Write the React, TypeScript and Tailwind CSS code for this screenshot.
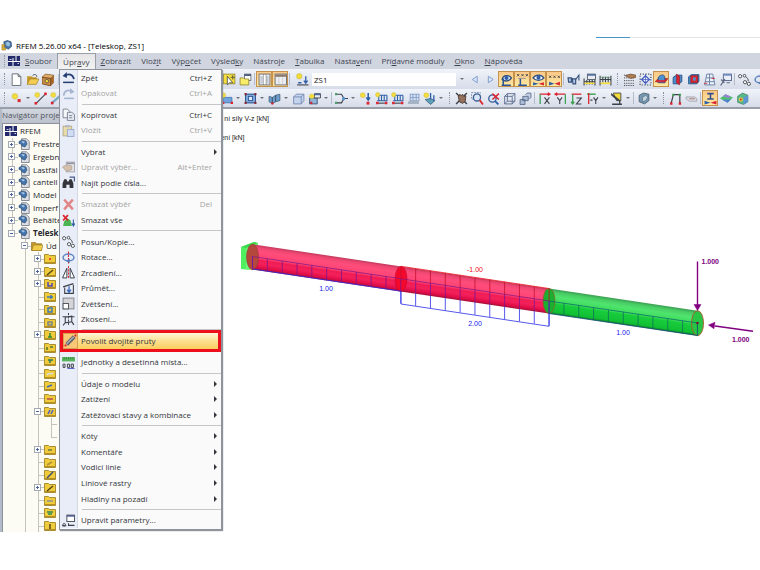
import type { ReactNode } from "react";
import clsx from "clsx";

const Y = "#f3dc3c";
const R = "#dc2430";
const B = "#2f5fa8";
const K = "#3c4048";
const L = "#8fb4e0";

// 12 x 12 glyphs shared by the toolbars and the menu
const glyphs: Record<string, ReactNode> = {
  newDoc: <path d="M2 .8h5.500l2.500 2.500v8.200H2zM7.500 .8v2.500h2.500" fill="#fff" stroke="#6d7178" strokeWidth=".9" />,
  open: (
    <>
      <path d="M1 3h4l1 1h4v6H1z" fill="#c79a2c" />
      <path d="M3.500 5.500H12L9.500 10.500H1z" fill="#f2cd52" stroke="#8a6a1c" strokeWidth=".5" />
      <path d="M6 2.500c2-2 4-1 4 1" stroke={K} fill="none" strokeWidth=".8" />
    </>
  ),
  folder: (
    <>
      <path d="M.5 2.500h4l1 1.200h5v6.800H.5z" fill="#c79a2c" stroke="#8a6a1c" strokeWidth=".6" />
      <path d="M2.500 5H12l-1.500 5.500H.8z" fill="#f0cc48" stroke="#8a6a1c" strokeWidth=".5" />
    </>
  ),
  crate: (
    <>
      <path d="M0 4l3-3 8 1v7l-3 3-8-2z" fill="#a8682c" />
      <path d="M0 4l3-3 8 1-3 3z" fill="#e0ac68" stroke="#5c3a1a" strokeWidth=".4" />
      <path d="M0 4l8 1v7l-8-2z" fill="#c98a45" stroke="#5c3a1a" strokeWidth=".6" />
      <circle cx="4.500" cy="7.500" r="1.600" fill={Y} stroke={K} strokeWidth=".6" />
    </>
  ),
  save: <path d="M1 1h10v10H1z" fill="#8fb4e8" stroke="#5078b4" strokeWidth=".7" />,
  point: (
    <>
      <circle cx="4.500" cy="4" r="2.600" fill={Y} stroke="#c8b848" strokeWidth=".5" />
      <rect x="7" y="6.500" width="2.800" height="2.800" fill={R} />
    </>
  ),
  line: (
    <>
      <circle cx="3" cy="2.800" r="2.300" fill={Y} stroke="#c8b848" strokeWidth=".4" />
      <path d="M2 10.500L10.500 2" stroke={K} strokeWidth="1" />
      <rect x=".5" y="9.200" width="2.400" height="2.400" fill={R} />
      <rect x="9.400" y=".5" width="2.400" height="2.400" fill={R} />
    </>
  ),
  member: (
    <>
      <circle cx="3" cy="2.800" r="2.300" fill={Y} stroke="#c8b848" strokeWidth=".4" />
      <path d="M2 10L10.500 2.500" stroke="#7ca8c4" strokeWidth="2.200" />
      <rect x=".8" y="9" width="2.400" height="2.400" fill={R} />
    </>
  ),
  pick: (
    <>
      <rect x=".5" y="1" width="10.500" height="9" fill={Y} stroke="#8a8028" strokeWidth=".7" />
      <path d="M4 3v8l2-2h3z" fill="#fff" stroke={K} strokeWidth=".7" />
      <path d="M9 2v4M7 4h4" stroke={K} strokeWidth=".7" />
    </>
  ),
  folderNew: (
    <>
      <rect x="5" y="1" width="6" height="6" fill="#fff" stroke={K} strokeWidth=".6" />
      <rect x="5" y="1" width="6" height="1.800" fill="#4f5f80" />
      <path d="M1 4.500h3l1 1h4V11H1z" fill="#f8ec68" stroke="#8a8028" strokeWidth=".7" />
    </>
  ),
  tableV: (
    <>
      <rect x="1" y="1" width="10" height="10" fill="#fff" stroke="#6c7078" strokeWidth=".9" />
      <path d="M2 2.500h2.500V10H2zM7.500 2.500h2.500V10H7.500z" fill="#c8ccd6" />
      <path d="M5 1v10M7.500 1v10" stroke="#6c7078" strokeWidth=".5" />
    </>
  ),
  tableH: (
    <>
      <rect x="1" y="1" width="10.500" height="10" fill="#eceef2" stroke="#6c7078" strokeWidth=".9" />
      <rect x="1.500" y="1.500" width="9.500" height="2" fill="#8c7868" />
      <path d="M4.500 4v7M8 4v7" stroke="#b0b4bc" strokeWidth=".5" />
    </>
  ),
  loadCase: (
    <>
      <circle cx="3" cy="3" r="2.500" fill={Y} stroke="#b8a428" strokeWidth=".4" />
      <path d="M9 3v5.500M7.300 7L9 9.300 10.700 7" stroke={B} strokeWidth="1.200" fill="none" />
      <path d="M2 9h3" stroke={B} strokeWidth="1.400" />
      <path d="M1 11h10.500" stroke={K} />
    </>
  ),
  prev: <path d="M8.500 3L4 6l4.500 3z" fill="#dce8f8" stroke="#7c9cd0" strokeWidth=".9" />,
  next: <path d="M4 3l4.500 3L4 9z" fill="#dce8f8" stroke="#7c9cd0" strokeWidth=".9" />,
  eyeLoad: (
    <>
      <path d="M2 6C2.500 2 8 1 10.500 4.500 9 8 4 8 2 6z" fill="#dfeaf8" stroke="#2c4c7c" strokeWidth="1.200" />
      <circle cx="6" cy="4.600" r="1.900" fill={B} />
      <path d="M3 5v6M1.500 11.300h8.500" stroke="#2c5494" strokeWidth="1.400" />
    </>
  ),
  valuesY: (
    <>
      <path d="M1 1l2 2m0-2L1 3M5 1l2 2m0-2L5 3M9 1l2 2m0-2L9 3" stroke={K} strokeWidth=".8" />
      <path d="M4 5v6M2 11.300h8" stroke="#2c5494" strokeWidth="1.400" />
      <path d="M2 5h7" stroke="#7c8498" strokeWidth=".7" />
    </>
  ),
  eyeResult: (
    <>
      <path d="M1 4.500C3.500 1 8.500 1 11 4.500 8.500 7.500 3.500 7.500 1 4.500z" fill="#fff" stroke="#2c4c7c" strokeWidth="1.200" />
      <circle cx="6" cy="4.300" r="1.900" fill={B} />
      <path d="M1 8.500v3l5-1.500z" fill={B} />
      <path d="M6 10l5-1.500v3z" fill={R} />
    </>
  ),
  valuesX: (
    <>
      <path d="M1 2.500l2 2m0-2l-2 2M5 2.500l2 2m0-2l-2 2M9 2.500l2 2m0-2l-2 2" stroke={K} strokeWidth=".8" />
      <path d="M1 8v3.500l5-1.500z" fill={B} />
      <path d="M6 10l5-2v3.500z" fill={R} />
    </>
  ),
  glasses: (
    <>
      <path d="M1 4.500h3v4H1.500zM5 5.500h3v4.500H5.500z" fill="#b8cce8" stroke="#34507c" strokeWidth="1.100" />
      <path d="M4 5l1.500 1M8 6l3-4v5" stroke="#34507c" fill="none" />
    </>
  ),
  calc: (
    <>
      <path d="M1 5v6.500M11 6v5.500M1 8h10M3.500 6.500v4M6 6.500v4M8.500 6.500v4" stroke={K} />
      <path d="M1.500 9.500h9" stroke={Y} strokeWidth="1.400" />
      <rect x="4" y="1" width="7.500" height="5" fill="#e8ebf2" stroke={K} strokeWidth=".7" />
      <rect x="4" y="1" width="7.500" height="1.500" fill="#4f6ca0" />
    </>
  ),
  calcAll: (
    <>
      <path d="M1 2.500v9M11 2.500v9M1 6h10M3.500 3.500v5M6 3.500v5M8.500 3.500v5" stroke={K} />
      <path d="M1.500 9.500h9" stroke={Y} strokeWidth="1.600" />
      <path d="M2 4h8" stroke="#4f8f60" strokeWidth=".7" />
    </>
  ),
  gridHand: (
    <>
      <path d="M1 2h10M1 4.500h10M1 7h10M1 9.500h10M1 11.500h10" stroke={K} strokeWidth=".9" strokeDasharray="1 1" />
      <path d="M2 2.500L7 1l5 1v2L7 5z" fill="#b07c50" stroke="#5c3c28" strokeWidth=".5" />
    </>
  ),
  snap: (
    <>
      <path d="M1 1h10v10H1z" fill="none" stroke={K} strokeDasharray="1 1.500" />
      <path d="M6 2.500L9.500 6 6 9.500 2.500 6z" fill="#fff" stroke="#4560c0" strokeWidth="1.200" />
      <path d="M6 1v10M1 6h10" stroke="#4560c0" strokeWidth=".7" />
    </>
  ),
  planeXY: (
    <>
      <path d="M0 8l3-3h9l-3 4z" fill={R} stroke="#84202a" strokeWidth=".5" />
      <path d="M3 4c2-3 6-3 6 0v5H3z" fill="#4f90d0" stroke="#1f4c84" strokeWidth=".7" />
      <path d="M1 6.500h10l-2 2H2z" fill={R} opacity=".85" />
    </>
  ),
  planeYZ: (
    <>
      <path d="M2 4l3-2h5v6l-3 2H2z" fill="#4f90d0" stroke="#1f4c84" strokeWidth=".8" />
      <path d="M5 1l3 2v8l-3-2z" fill={R} stroke="#84202a" strokeWidth=".5" />
    </>
  ),
  planeXZ: (
    <>
      <path d="M1.500 3.500L4 1.500h7v6l-2 2.500H1.500z" fill="#4f90d0" stroke="#1f4c84" strokeWidth=".8" />
      <rect x="3.500" y="2.500" width="6.500" height="6.500" fill={R} stroke="#84202a" strokeWidth=".6" />
      <path d="M5.500 4h2.500v3H5.500z" fill="#4f90d0" />
    </>
  ),
  raster: (
    <>
      <path d="M3.500 1L1.500 11h9.500L9 1zM3 4.500h7M2.500 8h8M6 1v10" fill="#eef2f8" stroke="#6c84a8" strokeWidth=".9" />
      <path d="M1 9.500h3M8 5h3" stroke={R} strokeWidth=".8" />
    </>
  ),
  dialogTool: (
    <>
      <rect x="4" y="1" width="7.500" height="6" fill="#e8eefa" stroke="#4c5c80" strokeWidth=".8" />
      <rect x="4" y="1" width="7.500" height="1.500" fill="#6f8cc0" />
      <path d="M1.500 11.500l4-6M2 6l3 3M7 9h3" stroke="#5c6880" strokeWidth="1.100" />
    </>
  ),
  nodes: (
    <>
      <circle cx="2" cy="3" r="1.500" fill="#fff" stroke={K} strokeWidth=".8" />
      <circle cx="6" cy="2.500" r="1.200" fill="#fff" stroke={K} strokeWidth=".8" />
      <circle cx="6.500" cy="8.500" r="1.500" fill="#fff" stroke={K} strokeWidth=".8" />
      <circle cx="10" cy="10" r="1.500" fill="#fff" stroke={K} strokeWidth=".8" />
      <path d="M7 3.500c2 1 2.500 2.500 2.500 4" stroke={K} fill="none" strokeWidth=".8" />
    </>
  ),
  rotate: (
    <>
      <ellipse cx="6" cy="6" rx="5" ry="3.200" fill="none" stroke="#5c84c4" strokeWidth="1.400" />
      <path d="M6 .5v11" stroke={R} strokeDasharray="2 1" />
      <path d="M4 9.200l3 2V7z" fill="#4f78b8" />
    </>
  ),
  surface: (
    <>
      <path d="M3 5h8v5H3z" fill="#6fa4dc" stroke={B} strokeWidth=".6" />
      <circle cx="3" cy="3" r="2.200" fill={Y} stroke="#c8b848" strokeWidth=".4" />
      <path d="M2 9h2v2H2zM9.800 9H12v2H9.800z" fill={R} />
    </>
  ),
  opening: (
    <>
      <rect x="1.500" y="2" width="9" height="8" fill={L} stroke="#245090" />
      <rect x="4" y="4" width="4" height="4" fill="#dce8f8" stroke="#245090" strokeWidth=".9" />
      <path d="M.5 1h2v2h-2zM9.500 1h2v2h-2zM.5 9h2v2h-2zM9.500 9h2v2h-2z" fill="#8a2c38" />
    </>
  ),
  wall: (
    <>
      <path d="M1 4l3 1v6L1 9zM4 5l3-2v6l-3 2zM7 3l4-1v6l-4 1z" fill="#6f9cc8" stroke="#34506c" strokeWidth=".6" />
      <path d="M3 9.500h2v2H3z" fill={R} />
    </>
  ),
  solid: (
    <>
      <path d="M1.500 4.500l2.500-2.500h7v6l-2.500 3h-7z" fill="#c4d4ec" stroke="#7488b0" strokeWidth=".8" />
      <path d="M1.500 4.500h7v6.500M8.500 4.500L11 2" stroke="#7488b0" fill="none" strokeWidth=".8" />
    </>
  ),
  solidSet: (
    <>
      <path d="M1.500 5.500h7V11h-7z" fill="#8fb4d8" stroke="#34506c" strokeWidth=".8" />
      <path d="M6 1.500h5.500v4H6z" fill="#e8ebf2" stroke={K} strokeWidth=".8" />
      <path d="M6 1.500h5.500v1.500H6z" fill="#4f6ca0" />
      <circle cx="3.500" cy="4" r="2.200" fill={Y} stroke="#c8b848" strokeWidth=".4" />
      <path d="M2 9h2v2H2z" fill={R} />
    </>
  ),
  hinge: (
    <>
      <path d="M1 2h5l2 3.500M1 10h5l2-3.500M8 6h4" stroke={K} strokeWidth="1" fill="none" />
      <circle cx="8" cy="6" r="1.500" fill="#4f90d0" />
      <path d="M0 9h2v2H0zM0 1h2v2H0z" fill="#4c9c6c" />
    </>
  ),
  nodalLoad: (
    <>
      <circle cx="3.500" cy="3" r="2.300" fill={Y} stroke="#c8b848" strokeWidth=".4" />
      <path d="M8.500 1v6M6.800 5l1.700 2.500L10.200 5" stroke={B} strokeWidth="1.400" fill="none" />
      <rect x="7" y="9" width="2.600" height="2.600" fill={R} />
    </>
  ),
  memberLoad: (
    <>
      <path d="M3.500 3h7.500M3.500 3v5M6 3v5M8.500 3v5M11 3v5M2 8h9.500" stroke={B} fill="none" />
      <circle cx="2.500" cy="2.500" r="2" fill={Y} stroke="#c8b848" strokeWidth=".4" />
      <path d="M3 10.300h6" stroke={K} />
      <path d="M1 9h2.400v2.400H1zM9 9h2.400v2.400H9z" fill={R} />
    </>
  ),
  areaLoad: (
    <>
      <path d="M3 2h8v6H3zM3 5h8M5.500 2v6M8.500 2v6" stroke="#8ca4cc" fill="#d8e4f4" />
      <path d="M1 9l2-1.500h8V11H1z" fill="#a4b4c4" />
    </>
  ),
  freeLoad: (
    <>
      <circle cx="3" cy="3" r="2.300" fill={Y} stroke="#c8b848" strokeWidth=".4" />
      <path d="M2 7l5-1 4 2-4 3.500z" fill="#5fa0b8" stroke="#245068" strokeWidth=".6" />
      <path d="M7 1v6M10 3v5" stroke={B} strokeWidth="1.200" />
    </>
  ),
  hand: (
    <>
      <path d="M1 1l3 3M11 1L8 4M1 11l3-3M11 11L8 8" stroke={K} strokeWidth="1.300" />
      <path d="M3 4l1.500-2 1 1.500L7 2l1 2 2-.5-.5 5L7 10.500 4 9z" fill="#94705c" stroke="#3c2c24" strokeWidth=".7" />
    </>
  ),
  zoomWin: (
    <>
      <path d="M.5 .5h8v6h-8z" fill="none" stroke="#6c84b0" strokeDasharray="1.500 1" strokeWidth=".8" />
      <circle cx="5.500" cy="5" r="3.300" fill="#d8e6f8" stroke="#3c5c94" strokeWidth="1.200" />
      <path d="M8 7.500l3 4" stroke={R} strokeWidth="1.600" />
    </>
  ),
  zoomAll: (
    <>
      <circle cx="5" cy="6" r="3.400" fill="#d8e6f8" stroke="#3c5c94" strokeWidth="1.200" />
      <path d="M7.500 8.500l3 3" stroke={B} strokeWidth="1.600" />
      <path d="M5 1.500l6 5.500m0-5.500L5 7" stroke={R} strokeWidth="1.300" />
    </>
  ),
  cube: <path d="M1.500 4h7v7h-7zM1.500 4L4 1.500h7L8.500 4M11 1.500v7L8.500 11M4 1.500v7h7M4 8.500L1.500 11" fill="none" stroke="#56688c" strokeWidth=".8" />,
  cubes: (
    <>
      <path d="M6 2.500L7.500 1H11v4L9.500 6.500" fill="#c4d0e4" stroke="#56688c" strokeWidth=".8" />
      <path d="M3.500 4h5v4h-5zM1 7h4.500v4.500H1z" fill="#aebcd4" stroke="#56688c" strokeWidth=".8" />
    </>
  ),
  axX: (
    <>
      <path d="M1.500 2h9.500M9 .7L11 2 9 3.300" stroke={R} fill="none" strokeWidth="1.200" />
      <path d="M2 2v9" stroke="#3ca050" strokeWidth="1.200" />
      <path d="M6 5l4.500 6m0-6L6 11" stroke={K} />
    </>
  ),
  axY: (
    <>
      <path d="M1 2h9.500M3 .7L1 2l2 1.300" stroke={R} fill="none" strokeWidth="1.200" />
      <path d="M10.500 2v9" stroke="#3ca050" strokeWidth="1.200" />
      <path d="M3 5l2.300 3L7.500 5M5.300 8v3" stroke={K} fill="none" />
    </>
  ),
  axZ: (
    <>
      <path d="M1.500 2h9" stroke={R} strokeWidth="1.200" />
      <path d="M2.500 2v9M1 9l1.500 2L4 9" stroke="#3ca050" fill="none" strokeWidth="1.200" />
      <path d="M6 5.500h4.500L6 11h4.500" stroke={K} fill="none" />
    </>
  ),
  axMinusY: (
    <>
      <path d="M1 2h8" stroke="#3ca050" strokeWidth="1.300" />
      <path d="M2.500 1v10" stroke={R} strokeWidth="1.200" />
      <path d="M4 7.500h2M7 5l2 3 2-3M9 8v3" stroke={K} fill="none" />
    </>
  ),
  render: (
    <>
      <path d="M3 1h7v7H6z" fill={Y} stroke={K} strokeWidth=".8" />
      <path d="M1 1l9 7H7L1 3z" fill={K} />
      <path d="M2 11.300h9M9 8v3" stroke={K} strokeWidth="1.200" />
    </>
  ),
  globe: (
    <>
      <path d="M2 3l4-2 5 1v6l-4 3-5-2z" fill="#7898b0" stroke="#40586c" strokeWidth=".7" />
      <path d="M5 5l3-2 2 2-2 3-3 1z" fill="#c0d4e0" stroke="#40586c" strokeWidth=".5" />
    </>
  ),
  frame: (
    <>
      <path d="M2 10.500L4 2.500h6v8" stroke={K} fill="none" strokeWidth="1.100" />
      <path d="M1 9.500h2.200v2.200H1zM9 9.500h2.200v2.200H9z" fill={R} />
      <path d="M3 1.500h2v2H3zM9 1.500h2v2H9z" fill="#3ca050" />
    </>
  ),
  pill: (
    <>
      <path d="M1 4.500h8l2 2v2H4L1 6.500z" fill="#d8dae0" stroke="#a4a8b0" strokeWidth=".8" />
      <path d="M4 6.200h5" stroke="#b08080" />
    </>
  ),
  section: (
    <>
      <path d="M3 1.500h6M6 1.500v5M3 6.500h6" stroke="#34508c" strokeWidth="1.400" />
      <path d="M.5 8v3.500L6 10z" fill={B} />
      <path d="M6 10l5.500-2v3.500z" fill={R} />
    </>
  ),
  isoSurf: (
    <>
      <path d="M0 6l5-4 7 3-5 5z" fill="#4fc070" />
      <path d="M2.500 4L5 2l5 2.200-2 1.300z" fill="#9c80d8" />
      <path d="M2 7.200L10 7 7 10z" fill="#4f80d8" />
    </>
  ),
  isoSolid: (
    <>
      <path d="M1.500 4L6 1l5 2v6l-4 2.500-5.500-2z" fill="#58b888" stroke="#34785c" strokeWidth=".6" />
      <path d="M7 5l4-2v6l-4 2.500z" fill="#5c94d4" />
      <circle cx="4.500" cy="7" r="1.900" fill="#e8d040" />
      <circle cx="4.500" cy="7" r=".9" fill={R} />
    </>
  ),
  undo: (
    <>
      <path d="M3 4.500c3-2.500 7-1.500 8 3" stroke="#263f72" strokeWidth="1.600" fill="none" />
      <path d="M.5 4.500L4.500 1v5.500z" fill="#263f72" />
      <path d="M1 10.500h10" stroke="#263f72" strokeWidth="1.400" />
    </>
  ),
  redo: (
    <>
      <path d="M9 4.500C6 2 2 3 1.500 8" stroke="#a4b4d0" strokeWidth="1.600" fill="none" />
      <path d="M11.500 4.500L7.500 1v5.500z" fill="#a4b4d0" />
      <path d="M2 10.500h9" stroke="#a4b4d0" strokeWidth="1.400" />
    </>
  ),
  copy: (
    <>
      <path d="M1 1h4l2 2v6H1z" fill="#f4f6fa" stroke="#737a88" strokeWidth=".8" />
      <path d="M5 4h4l2.500 2v5.500H5zM6.500 7h3M6.500 9h3" fill="#e8ecf4" stroke="#737a88" strokeWidth=".8" />
    </>
  ),
  paste: (
    <>
      <rect x="1" y="2" width="8" height="9" fill="#e8dca8" stroke="#b0a888" strokeWidth=".8" />
      <rect x="3" y="1" width="4" height="2" fill="#b4b8c4" />
      <rect x="5" y="5" width="6" height="6.500" fill="#cfdcf4" stroke="#98a8cc" strokeWidth=".8" />
    </>
  ),
  props: (
    <>
      <rect x="4" y="1" width="7.500" height="9" fill="#e4e4e8" stroke="#a0a0a8" strokeWidth=".8" />
      <path d="M4.500 2.200h6.500" stroke="#8c90a0" strokeWidth="1.400" />
      <path d="M.5 5.500l3.500-2 5 1v3.500l-5 1.500z" fill="#d4c0ac" stroke="#a89888" strokeWidth=".6" />
    </>
  ),
  binoculars: (
    <>
      <path d="M7 1h4.500v4" stroke="#4c5c90" fill="none" strokeWidth="1.300" />
      <path d="M.5 11V7l1.500-4h2l1 2h1l1-2h2l1.500 4v4H7V8H4v3z" fill="#34363c" />
    </>
  ),
  cross: <path d="M2 1.500c3 3 5 5.500 8 9M10 1.500L2 10.500" stroke="#e08484" strokeWidth="2.200" />,
  crossAll: (
    <>
      <path d="M2 7l3-3 3 2 1 5H1z" fill="#4cb450" />
      <path d="M10.500 5v5M9 8.500l1.500 2.500L12 8.500" stroke={B} fill="none" />
      <path d="M1 1l4.500 5M5.500 1L1 6" stroke={R} strokeWidth="1.600" />
    </>
  ),
  mirror: (
    <>
      <path d="M4.500 2v9H.5zM7.500 2v9h4z" fill="#fff" stroke={K} strokeWidth=".9" />
      <path d="M6 0v12" stroke={R} strokeDasharray="2 1" strokeWidth=".9" />
    </>
  ),
  project: (
    <>
      <path d="M1 4.500l9.500-3M2.500 5v5.500h8V2.500" stroke={K} fill="none" />
      <path d="M6.500 4v4.500M4.700 7l1.800 2.500L8.300 7" stroke="#3c68c0" fill="none" strokeWidth="1.200" />
    </>
  ),
  scale: (
    <>
      <rect x="1" y="1" width="10" height="10" fill="#d4d4d8" stroke="#84868c" strokeWidth=".9" />
      <rect x="1" y="6" width="5" height="5" fill="#fff" stroke="#54565c" strokeWidth=".9" />
    </>
  ),
  shear: (
    <>
      <path d="M3 4l6-1v5l-6 1zM.5 3.500h11M3 9l-2 2.500M9 8l2 3" stroke={K} fill="none" strokeWidth="1" />
      <path d="M6 0v12" stroke={K} strokeDasharray="2 1" strokeWidth=".9" />
    </>
  ),
  bar: (
    <>
      <path d="M2.500 9.500l7-7" stroke="#60646c" strokeWidth="3.600" />
      <path d="M2.500 9l6.500-6.500" stroke="#a8acb4" strokeWidth="1.400" />
      <path d="M.5 9.700h1.800v1.800H.5zM9.700.5h1.800v1.800H9.700z" fill={R} />
    </>
  ),
  units: (
    <>
      <rect x="0" y="1" width="12" height="4" fill="#58b45c" />
      <path d="M2 1v2M4 1v2M6 1v2M8 1v2M10 1v2" stroke="#2c7034" strokeWidth=".6" />
      <path d="M1 7.500h1.800v3H1zM5 7.500h2v3H5zM8.500 7.500h2v3h-2z" fill="none" stroke={K} strokeWidth=".9" />
      <path d="M5 11.600h6.500" stroke="#4048c0" strokeWidth=".8" />
    </>
  ),
  params: (
    <>
      <rect x="4.500" y="1" width="7" height="6" fill="#fff" stroke={K} strokeWidth=".8" />
      <rect x="4.500" y="1" width="7" height="1.500" fill="#4f5f90" />
      <path d="M6 8.500v2M5.500 10.500h6M0 10.800h4" stroke={K} strokeWidth="1" fill="none" />
      <circle cx="2" cy="10" r="1.200" fill="none" stroke={K} strokeWidth=".8" />
    </>
  ),
};

const Glyph = ({ name, className = "size-[13px]" }: { name: string; className?: string }) => (
  <svg viewBox="0 0 12 12" className={clsx("shrink-0", className)} aria-hidden="true">
    {glyphs[name]}
  </svg>
);

const Tool = ({ name, on }: { name: string; on?: boolean }) => (
  <button
    type="button"
    aria-label={name}
    aria-pressed={on}
    className={clsx(
      "flex h-4 w-4 shrink-0 items-center justify-center",
      on && "border border-[#c4924c] bg-gradient-to-b from-[#fbc888] to-[#fde9a0]"
    )}
  >
    <Glyph name={name} />
  </button>
);

const Caret = () => (
  <span className="flex w-2 shrink-0 justify-center">
    <span className="border-x-2 border-t-2 border-x-transparent border-t-[#6c7078]" />
  </span>
);

const Sep = () => <span className="mx-px h-3 w-px shrink-0 bg-[#b4bac8]" />;

const Grip = () => (
  <span className="flex w-2 shrink-0 justify-center">
    <span className="h-3 border-l border-dotted border-[#8a92a4]" />
  </span>
);

// "|" separator, ":" grip, "v" drop-down arrow, leading "*" marks a pressed button
const Tools = ({ items }: { items: string }) => (
  <>
    {items.split(" ").map((item, i) => {
      if (item === "|") return <Sep key={i} />;
      if (item === ":") return <Grip key={i} />;
      if (item === "v") return <Caret key={i} />;
      return <Tool key={i} name={item.replace("*", "")} on={item.startsWith("*")} />;
    })}
  </>
);

const Brand = () => (
  <svg viewBox="0 0 12 10" className="h-[10px] w-3 shrink-0" aria-hidden="true">
    <rect width="12" height="10" fill="#232a6c" />
    <path d="M0 5.500h12M5 2v8M8 0v5.500" stroke="#fff" strokeWidth="1" />
    <path d="M1.500 3.500h2M9.500 7.500h1.500" stroke="#fff" strokeWidth=".8" />
  </svg>
);

const AppIcon = () => (
  <svg viewBox="0 0 12 12" className="size-[11px] shrink-0" aria-hidden="true">
    <path d="M3 2l4-1.500L11 2l.5 5L8 10 4 8z" fill="#4878ac" stroke="#24405c" strokeWidth=".7" />
    <path d="M5 3l3-1 2 2-1 3-3-1z" fill="#9cc0e0" />
    <path d="M1 5h3v2H2.500v1.500H5V11H1z" fill="#e8b830" stroke="#7c6018" strokeWidth=".5" />
  </svg>
);

const ModelIcon = () => (
  <svg viewBox="0 0 12 12" className="size-3 shrink-0" aria-hidden="true">
    <path d="M3.500 .8h5l2.700 2.500v8.200H3.500z" fill="#dcdee4" stroke="#7c828c" strokeWidth=".9" />
    <path d="M1 3.500L4 2l4 1 1 3-2 3-3-1-1-2-2-.5z" fill="#4474ac" stroke="#284868" strokeWidth=".6" />
    <path d="M3 3.800l2-.8 2 1-1.500 1.500z" fill="#a4c4e4" />
  </svg>
);

const menuBar = [
  ["", "S", "oubor"],
  ["Úpr", "a", "vy"],
  ["", "Z", "obrazit"],
  ["Vlož", "i", "t"],
  ["Výp", "o", "čet"],
  ["Výsled", "k", "y"],
  ["Nástro", "j", "e"],
  ["", "T", "abulka"],
  ["Nasta", "v", "ení"],
  ["Pří", "d", "avné moduly"],
  ["", "O", "kno"],
  ["", "N", "ápověda"],
];

type MenuEntry = {
  label: string;
  icon?: string;
  keys?: string;
  disabled?: boolean;
  sub?: boolean;
  hot?: boolean;
};

const menu: (MenuEntry | null)[] = [
  { label: "Zpět", icon: "undo", keys: "Ctrl+Z" },
  { label: "Opakovat", icon: "redo", keys: "Ctrl+A", disabled: true },
  null,
  { label: "Kopírovat", icon: "copy", keys: "Ctrl+C" },
  { label: "Vložit", icon: "paste", keys: "Ctrl+V", disabled: true },
  null,
  { label: "Vybrat", sub: true },
  { label: "Upravit výběr...", icon: "props", keys: "Alt+Enter", disabled: true },
  { label: "Najít podle čísla...", icon: "binoculars" },
  null,
  { label: "Smazat výběr", icon: "cross", keys: "Del", disabled: true },
  { label: "Smazat vše", icon: "crossAll" },
  null,
  { label: "Posun/Kopie...", icon: "nodes" },
  { label: "Rotace...", icon: "rotate" },
  { label: "Zrcadlení...", icon: "mirror" },
  { label: "Průmět...", icon: "project" },
  { label: "Zvětšení...", icon: "scale" },
  { label: "Zkosení...", icon: "shear" },
  null,
  { label: "Povolit dvojité pruty", icon: "bar", hot: true },
  null,
  { label: "Jednotky a desetinná místa...", icon: "units" },
  null,
  { label: "Údaje o modelu", sub: true },
  { label: "Zatížení", sub: true },
  { label: "Zatěžovací stavy a kombinace", sub: true },
  null,
  { label: "Kóty", sub: true },
  { label: "Komentáře", sub: true },
  { label: "Vodicí linie", sub: true },
  { label: "Liniové rastry", sub: true },
  { label: "Hladiny na pozadí", sub: true },
  null,
  { label: "Upravit parametry...", icon: "params" },
];

const EditMenu = () => (
  <div
    role="menu"
    className="absolute bottom-[2px] left-[59px] top-[69px] z-20 flex w-[163px] flex-col border border-[#8f939b] bg-[#fafafa] pb-px shadow-[1px_1px_1px_#8f939b]"
  >
    {menu.map((m, i) =>
      m ? (
        <button
          key={i}
          type="button"
          role="menuitem"
          disabled={m.disabled}
          className={clsx(
            "relative flex min-h-0 flex-1 items-center text-left text-[8px] leading-none",
            m.disabled ? "text-[#a4a4a4]" : "text-[#33363c]"
          )}
        >
          {m.hot && (
            <span className="absolute -inset-y-[3px] inset-x-0 border-[3px] border-[#ee0f1c] bg-gradient-to-b from-[#fff6d8] via-[#fce090] to-[#f9cf5c]" />
          )}
          <span
            className={clsx(
              "relative flex shrink-0 items-center justify-center self-stretch",
              m.hot ? "ml-[3px] w-[15px] border border-[#d8a050] bg-[#fbc878]" : "w-[18px] border-r border-[#d4d8e2] bg-[#e9edf7]"
            )}
          >
            {m.icon && <Glyph name={m.icon} />}
          </span>
          <span className="relative flex-1 whitespace-nowrap pl-[3px]">{m.label}</span>
          {m.keys && <span className="pr-[9px]">{m.keys}</span>}
          {m.sub && <span className="mr-1 border-y-[3px] border-l-[3px] border-y-transparent border-l-[#33363c]" />}
        </button>
      ) : (
        <div key={i} className="flex h-[6px] shrink-0 items-center">
          <span className="h-full w-[18px] border-r border-[#d4d8e2] bg-[#e9edf7]" />
          <span className="ml-1 h-px flex-1 bg-[#c4c6ca]" />
        </div>
      )
    )}
  </div>
);

const Expander = ({ open }: { open?: boolean }) => (
  <svg viewBox="0 0 7 7" className="relative size-[7px]" aria-hidden="true">
    <rect x=".5" y=".5" width="6" height="6" fill="#fff" stroke="#a4aab4" />
    <path d={open ? "M2 3.500h3" : "M2 3.500h3M3.500 2v3"} stroke="#4c64a0" />
  </svg>
);

// v: vertical guide, t: branch, l: last branch, +/-: expander on a branch, L: last open expander, "_": blank
const Guide = ({ kind }: { kind: string }) => (
  <span className="relative flex w-[13px] shrink-0 items-center justify-center self-stretch">
    {kind !== "_" && (
      <span
        className={clsx(
          "absolute left-1/2 top-0 w-px bg-[#c4c4bc]",
          kind === "l" || kind === "L" ? "h-1/2" : "h-full"
        )}
      />
    )}
    {kind !== "_" && kind !== "v" && <span className="absolute left-1/2 right-0 top-1/2 h-px bg-[#c4c4bc]" />}
    {"+-L".includes(kind) && <Expander open={kind !== "+"} />}
  </span>
);

const Folder = ({ mark }: { mark: string }) => (
  <svg viewBox="0 0 12 11" className="h-[11px] w-3 shrink-0" aria-hidden="true">
    <path d="M.5 1.500h4l1 1h6v8H.5z" fill="#f0cc3c" stroke="#94781c" strokeWidth=".8" />
    <path d="M1 9.500h10" stroke="#b89020" />
    <path d={mark.split("/")[1]} stroke={mark.split("/")[0]} strokeWidth="1.500" fill="none" />
  </svg>
);

const models = ["Prestre", "Ergebn", "Lastfäl", "cantell", "Model", "Imperf", "Behälte"];

const folders: [string, string][] = [
  ["+", "#dc2430/M5 6h2"],
  ["+", "#54481c/M3 9l6-5"],
  ["+", "#5048b8/M4 4v4h4V5"],
  ["t", "#3c78b8/M3 6h6M7 4v4"],
  ["t", "#3c78b8/M4 4h4v4H4z"],
  ["t", "#7c8488/M4 5h4v3H4z"],
  ["+", "#2c8c34/M6 4v4M4 8h4"],
  ["t", "#54782c/M3 5v3M6 5h3"],
  ["t", "#2c7c54/M4 5h5M6 5v3"],
  ["t", "#d8dce0/M3 7c2-3 4 0 6-2"],
  ["t", "#3c6cb8/M3 7l5-2"],
  ["t", "#b84c54/M3 6h6"],
  ["-", "#4c60c8/M4 8l2-4M7 8l2-4"],
  ["v", ""],
  ["v", "last"],
  ["+", "#6c7848/M4 6h4"],
  ["t", "#b09038/M3 8l5-3"],
  ["t", "#3c4c74/M3 9l6-6"],
  ["+", "#54481c/M3 9l6-5"],
  ["t", "#8c9094/M3 6h6"],
  ["t", "#2c8c54/M3 5h6M4 7h4"],
  ["t", "#54481c/M6 4v5"],
];

const TreeRow = ({ children }: { children: ReactNode }) => (
  <li className="flex min-h-0 flex-1 items-center whitespace-nowrap">{children}</li>
);

const Navigator = () => (
  <aside className="flex w-[219px] shrink-0 flex-col border-l-2 border-[#b3bac8]">
    <h2 className="h-[14px] bg-gradient-to-b from-[#d2d6de] to-[#bcc1cc] text-[8px] font-medium leading-[12px] text-[#50555f]">
      Navigátor proje
    </h2>
    <ul className="flex min-h-0 flex-1 flex-col overflow-hidden border-l border-t border-[#8a92a2] bg-[#fdfcf4] pl-[2px] pt-px text-[8px] leading-none text-[#24262c]">
      <TreeRow>
        <Brand />
        <span className="pl-[3px]">RFEM</span>
      </TreeRow>
      {models.map((name) => (
        <TreeRow key={name}>
          <Guide kind="+" />
          <ModelIcon />
          <span className="pl-[3px]">{name}</span>
        </TreeRow>
      ))}
      <TreeRow>
        <Guide kind="L" />
        <ModelIcon />
        <span className="pl-[3px] font-bold">Telesk</span>
      </TreeRow>
      <TreeRow>
        <Guide kind="_" />
        <Guide kind="-" />
        <Glyph name="folder" className="size-3" />
        <span className="pl-[3px]">Úd</span>
      </TreeRow>
      {folders.map(([kind, mark], i) => (
        <TreeRow key={i}>
          <Guide kind="_" />
          <Guide kind="v" />
          <Guide kind={kind} />
          {kind === "v" ? <Guide kind={mark === "last" ? "l" : "t"} /> : <Folder mark={mark} />}
        </TreeRow>
      ))}
    </ul>
  </aside>
);

const axisY = (x: number) => 256.5 + (x - 252.5) * 0.1495;
const steps = Array.from({ length: 31 }, (_, i) => 252.5 + i * 14.83);

const Model = () => (
  <svg
    viewBox="219 109 541 423"
    preserveAspectRatio="xMinYMin meet"
    className="min-w-0 flex-1 bg-white font-['Liberation_Sans',Arial,sans-serif]"
  >
    <defs>
      <linearGradient id="red" gradientUnits="userSpaceOnUse" x1="401" y1="266.500" x2="397.400" y2="290.600">
        <stop offset="0" stopColor="#c23a5c" />
        <stop offset=".1" stopColor="#ee4672" />
        <stop offset=".25" stopColor="#ff4d7b" />
        <stop offset=".52" stopColor="#fd4374" />
        <stop offset=".6" stopColor="#f01c56" />
        <stop offset=".75" stopColor="#f4205a" />
        <stop offset=".92" stopColor="#e00c48" />
        <stop offset="1" stopColor="#a81038" />
      </linearGradient>
      <linearGradient id="green" gradientUnits="userSpaceOnUse" x1="549" y1="288.500" x2="545.400" y2="312.600">
        <stop offset="0" stopColor="#3a9c50" />
        <stop offset=".12" stopColor="#48cc64" />
        <stop offset=".3" stopColor="#50e46e" />
        <stop offset=".52" stopColor="#3cdc5c" />
        <stop offset=".6" stopColor="#18cc3c" />
        <stop offset=".92" stopColor="#10c034" />
        <stop offset="1" stopColor="#14802c" />
      </linearGradient>
    </defs>
    <g fontSize="7" fill="#222">
      <text x="269" y="120.500" textAnchor="end">ní síly V-z [kN]</text>
      <text x="244.500" y="139.500" textAnchor="end">ení [kN]</text>
    </g>
    <path d="M241 247l13-5 4 1v25l-10 2-7-1z" fill="#6cf878" />
    <path d="M241 247l5 1v21l-5 0z" fill="#50f060" />
    <path d="M241 247l13-5 4 1-12 5z" fill="#38d848" />
    <path d="M253 244.300L549 288.500V313.500L252 269.500z" fill="url(#red)" />
    <ellipse cx="252.500" cy="257" rx="6" ry="12.700" fill="#b5483c" stroke="#8c3c30" strokeWidth=".6" />
    <path d="M549 288.500L697.500 310.700V335.700L549 313.500z" fill="url(#green)" />
    <ellipse cx="401" cy="279" rx="6" ry="12.500" fill="#f4082c" stroke="#c00830" strokeWidth=".6" />
    <ellipse cx="549" cy="301" rx="6" ry="12.500" fill="#1cae30" stroke="#8c5c20" strokeWidth=".7" />
    <ellipse cx="697.500" cy="323.200" rx="6" ry="12.500" fill="#28c444" stroke="#b0562c" strokeWidth=".9" />
    <g stroke="#2c2ce8" strokeWidth=".8" fill="none">
      <path d="M252.500 256.500V269L401 291.200V304L549 326.300V301" />
      <path d="M549 313.500L697.500 335.500V323" stroke="#104c78" />
      <path d="M252.500 256.500L549 301" stroke="#8c1880" />
      <path d="M549 301L697.500 323" stroke="#0c6c68" />
      {steps.map((x, i) => {
        const y = axisY(x);
        const middle = i >= 10 && i <= 20;
        const stroke = i > 20 ? "#10705c" : "#7c1490";
        return (
          <g key={i}>
            <path d={`M${x} ${y}v12.500`} stroke={stroke} />
            {middle && <path d={`M${x} ${y + 12.5}v12.500`} />}
            {middle && <path d={`M${x} ${y}v-12.500`} stroke="#c4102c" />}
          </g>
        );
      })}
      <path d="M401 266.300L549 288.500" stroke="#f01c24" />
    </g>
    <g fontSize="7" textAnchor="middle" fill="#1414f0">
      <text x="326" y="290.500">1.00</text>
      <text x="475" y="272" fill="#f80c14">-1.00</text>
      <text x="475" y="325.500">2.00</text>
      <text x="623" y="334.500">1.00</text>
    </g>
    <circle cx="697.500" cy="323" r="1.300" fill="#84102c" />
    <g fill="#800080" stroke="#800080">
      <path d="M697.500 261.500V305M753 331.300L715 326" strokeWidth="1.400" />
      <path d="M694 304.500h7l-3.500 6zM708.500 325l6.500-2.700-1 6.400z" strokeWidth=".5" />
      <g fontSize="7" fontWeight="bold" stroke="none">
        <text x="701.500" y="263.500">1.000</text>
        <text x="732" y="341.500">1.000</text>
      </g>
    </g>
  </svg>
);

export default function App() {
  return (
    <div className="flex h-screen flex-col overflow-hidden bg-white font-['Open_Sans','Noto_Sans',sans-serif]">
      <div className="flex h-[38px] shrink-0 items-end justify-end">
        <span className="h-px w-[34px] bg-[#4a94cc]" />
        <span className="h-px w-[130px] bg-[#e4e4e4]" />
      </div>

      <div className="relative -mt-[38px] flex min-h-0 flex-1 flex-col pt-[38px]">
        <header className="flex h-[15px] shrink-0 items-center gap-1 pl-[1px] text-[8px] leading-none text-black">
          <AppIcon />
          <h1>RFEM 5.26.00 x64 - [Teleskop, ZS1]</h1>
        </header>

        <nav className="flex h-4 shrink-0 items-center bg-[#d0d5df] text-[8px] leading-none text-[#3f4552]">
          <Grip />
          <Brand />
          {menuBar.map(([a, u, b]) => (
            <button
              key={a + u + b}
              type="button"
              className={clsx(
                "flex h-4 items-center whitespace-nowrap px-[5px]",
                a === "Úpr" ? "border border-b-0 border-[#9a9ea6] bg-gradient-to-b from-[#e6e6e8] to-[#f2f2f2]" : ""
              )}
            >
              <span>
                {a}
                <u>{u}</u>
                {b}
              </span>
            </button>
          ))}
        </nav>

        <div className="flex h-5 shrink-0 items-center overflow-hidden bg-gradient-to-b from-[#f0f3f9] to-[#d6dce9]">
          <div className="flex w-[221px] shrink-0 items-center">
            <Grip />
            <Tools items="newDoc open crate save" />
          </div>
          <Tools items="pick folderNew | *tableV *tableH |" />
          <span className="w-[3px] shrink-0" />
          <Tools items="loadCase" />
          <select
            aria-label="ZS"
            className="mx-[2px] h-[13px] min-w-0 flex-1 appearance-none bg-white pl-[2px] text-[8px] leading-[13px] text-[#222]"
          >
            <option>ZS1</option>
          </select>
          <Caret />
          <Tools items="prev next *eyeLoad *valuesY *eyeResult *valuesX | glasses calc calcAll : gridHand snap *planeXY planeYZ planeXZ raster dialogTool | nodes" />
          <div className="w-2 shrink-0 overflow-hidden">
            <Tools items="rotate" />
          </div>
        </div>

        <div className="flex h-[18px] shrink-0 items-center overflow-hidden bg-gradient-to-b from-[#f0f3f9] to-[#d6dce9]">
          <div className="flex w-[218px] shrink-0 items-center">
            <Grip />
            <Tools items="point v line member" />
          </div>
          <Tools items="surface v opening v wall v solid solidSet v | hinge v nodalLoad memberLoad memberLoad areaLoad freeLoad v : hand zoomWin zoomAll cube cubes | axX axY axZ axMinusY v render v | globe v : frame pill | *section isoSurf isoSolid" />
        </div>

        <div className="flex min-h-0 flex-1 border-t-2 border-[#9a9ea8]">
          <Navigator />
          <Model />
        </div>

        <EditMenu />
      </div>

      <div className="h-[38px] shrink-0" />
    </div>
  );
}
